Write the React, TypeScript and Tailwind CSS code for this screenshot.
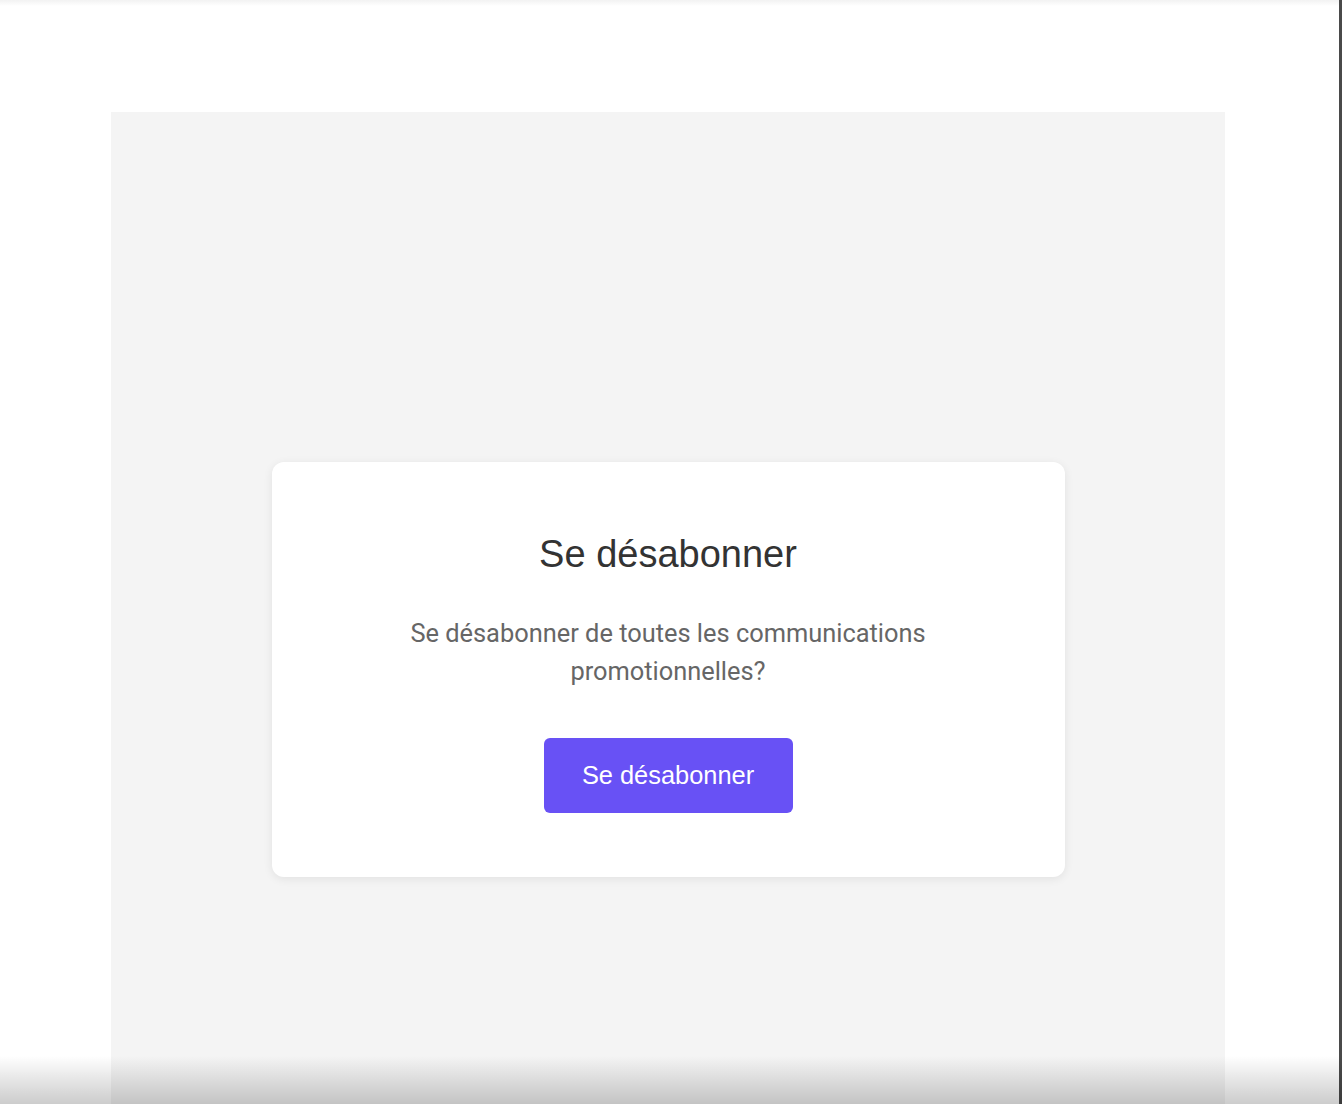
export default function App() {
  return (
    <main className="relative h-[1104px] overflow-hidden bg-white font-['Liberation_Sans',Arial,sans-serif]">
      {/* faint top edge */}
      <div className="h-[6px] bg-gradient-to-b from-[#f2f2f2] to-white" />

      {/* gray page panel */}
      <section className="ml-[111px] mt-[106px] flex h-[1100px] w-[1114px] justify-center bg-[#f4f4f4] pt-[350px]">
        {/* card */}
        <div className="flex h-[415px] w-[793px] flex-col items-center rounded-xl bg-white pt-[70px] shadow-[0_2px_10px_rgba(0,0,0,0.08)]">
          <h1 className="text-[38px] leading-[44px] text-[#333333]">Se désabonner</h1>
          <p className="mt-[38px] max-w-[600px] text-center font-['Roboto',sans-serif] text-[25.4px] leading-[38px] text-[#666666]">
            Se désabonner de toutes les communications promotionnelles?
          </p>
          <button className="mt-[48px] h-[75px] w-[249px] rounded-md bg-[#6851f5] text-[25.4px] text-white">
            Se désabonner
          </button>
        </div>
      </section>

      {/* right window edge */}
      <div className="absolute right-0 top-0 h-full w-[3px] bg-[#4a4a4a]" />

      {/* bottom fade */}
      <div className="absolute bottom-0 left-0 h-[48px] w-full bg-gradient-to-b from-transparent to-[rgba(0,0,0,0.2)]" />
    </main>
  );
}
